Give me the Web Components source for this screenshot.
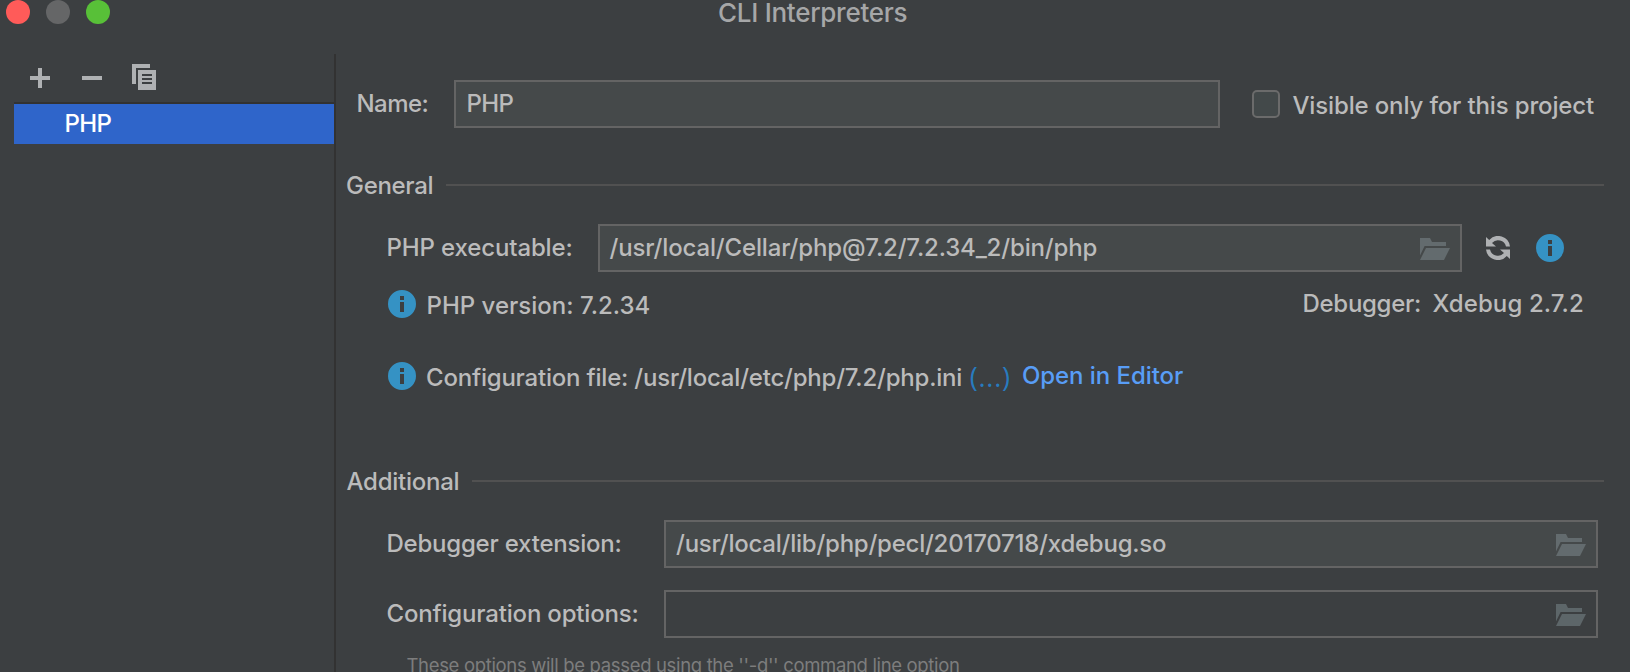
<!DOCTYPE html>
<html lang="en">
<head>
<meta charset="utf-8">
<title>CLI Interpreters</title>
<style>
  html, body { margin: 0; height: 100%; overflow: hidden; background: #3c3f41; }
</style>
</head>
<body>
<cli-dialog></cli-dialog>
<script>
const define = (name, html, Base = HTMLElement, ready) => {
  const template = document.createElement('template');
  template.innerHTML = html;
  customElements.define(name, class extends Base {
    connectedCallback() {
      if (this.shadowRoot) return;
      this.attachShadow({ mode: 'open' }).append(template.content.cloneNode(true));
      if (ready) ready(this);
    }
  });
};

/* A single line of text whose ink spans exactly `w` pixels. */
const ctx = document.createElement('canvas').getContext('2d');
define('ui-text', `
  <style>
    :host { display: block; flex: none; height: 30px; white-space: nowrap; line-height: 30px; }
    span { display: block; position: relative; }
  </style>
  <span><slot></slot></span>`, HTMLElement, el => {
    const span = el.shadowRoot.querySelector('span');
    const w = parseFloat(el.getAttribute('w'));
    const cs = getComputedStyle(el);
    const text = el.textContent;
    ctx.font = `${cs.fontWeight} ${cs.fontSize} ${cs.fontFamily}`;
    const m = ctx.measureText(text);
    const ink = m.actualBoundingBoxLeft + m.actualBoundingBoxRight;
    span.style.letterSpacing = ((w - ink) / (text.length - 1)).toFixed(3) + 'px';
    span.style.marginLeft = m.actualBoundingBoxLeft.toFixed(2) + 'px';
    el.style.width = w + 'px';
});

define('icon-info', `
  <style>:host { display: block; flex: none; width: 28px; height: 28px; } svg { display: block; }</style>
  <svg width="28" height="28" viewBox="0 0 28 28"><path fill="#3592c4" fill-rule="evenodd" d="M14 0a14 14 0 1 1 0 28a14 14 0 1 1 0-28zM12 6v4h4V6zM12 12v10h4V12z"/></svg>`);

define('icon-folder', `
  <style>:host { display: block; flex: none; width: 30px; height: 22px; color: #636b6e; } svg { display: block; }</style>
  <svg width="30" height="22" viewBox="0 0 30 22" fill="currentColor"><path d="M0 0H10L12 4H26V8H4.6L0 17.5z"/><path d="M6 10H30L24 22H0z"/></svg>`);

define('icon-refresh', `
  <style>:host { display: block; flex: none; width: 24px; height: 24px; } svg { display: block; }</style>
  <svg width="24" height="24" viewBox="0 0 24 24" fill="#afb1b3">
    <path d="M0 1L3.2 4.1A11.9 11.9 0 0 1 24 10.5H20A8.2 8.2 0 0 0 6 6.9L10 10.6H0z"/>
    <path transform="rotate(180 12 12)" d="M0 1L3.2 4.1A11.9 11.9 0 0 1 24 10.5H20A8.2 8.2 0 0 0 6 6.9L10 10.6H0z"/>
  </svg>`);

define('title-bar', `
  <style>
    :host { display: grid; grid-template-columns: 719px 1fr; height: 54px; align-items: start; color: #a6a7a8; font-size: 26px; }
    .lights { display: flex; gap: 16px; padding-left: 6px; }
    i { width: 24px; height: 24px; border-radius: 50%; background: #656667; }
    .r { background: #ff5b59; } .g { background: #58c038; }
    ui-text { line-height: 26px; height: 26px; }
  </style>
  <div class="lights"><i class="r"></i><i></i><i class="g"></i></div>
  <ui-text w="187.5">CLI Interpreters</ui-text>`);

define('side-list', `
  <style>
    :host { display: flex; flex-direction: column; box-sizing: border-box; width: 336px; border-right: 2px solid #323232; padding-left: 14px; }
    nav { display: flex; height: 48px; padding-left: 16px; box-sizing: border-box; }
    svg { display: block; }
    .add { margin: 14px 32px 0 0; } .del { margin: 22px 30px 0 0; } .copy { margin-top: 10px; }
    .row { display: flex; box-sizing: border-box; height: 42px; border-top: 2px solid #323232; background: #2f65ca; color: #fff; padding: 5px 0 0 51.5px; }
  </style>
  <nav>
    <svg class="add" width="20" height="20" fill="#afb1b3"><path d="M8 0h4v8h8v4h-8v8H8v-8H0V8h8z"/></svg>
    <svg class="del" width="20" height="4" fill="#afb1b3"><path d="M0 0h20v4H0z"/></svg>
    <svg class="copy" width="24" height="26" fill="#afb1b3"><path d="M0 0H18V4H4V20H0z"/><path fill-rule="evenodd" d="M6 6H24V26H6zM10 10v2h10v-2zM10 14v2h10v-2zM10 18v2h10v-2z"/></svg>
  </nav>
  <div class="row"><ui-text w="46">PHP</ui-text></div>`);

define('path-field', `
  <style>
    :host { display: flex; flex: none; justify-content: space-between; box-sizing: border-box; height: 48px; border: 2px solid #646464; background: #45494a; padding: 7px 10px 0; }
    :host([empty]) { background: #3c3f41; justify-content: flex-end; }
    :host([empty]) icon-folder { color: #5d6669; }
    icon-folder { margin-top: 5px; }
    :host([plain]) icon-folder { display: none; }
  </style>
  <slot></slot><icon-folder></icon-folder>`);

define('section-title', `
  <style>
    :host { display: flex; flex: none; align-items: flex-start; gap: 13.5px; height: 30px; margin-right: 26px; }
    hr { flex: 1; border: 0; height: 2px; background: #515151; margin: 14px 0 0; }
    ::slotted(*) { margin-top: 1px; }
  </style>
  <slot></slot><hr>`);

define('form-row', `
  <style>:host { display: flex; flex: none; align-items: flex-start; height: 48px; }</style><slot></slot>`);

define('interpreter-form', `
  <style>
    :host { display: flex; flex-direction: column; flex: 1; padding: 26px 0 0 11px; min-width: 0; }
    .name { padding-left: 10.5px; }
    .ind { padding-left: 41px; }
    form-row > ui-text { margin-top: 9px; }
    i { box-sizing: border-box; flex: none; width: 28px; height: 28px; border: 2px solid #6b6b6b; border-radius: 5px; background: #43494a; margin: 10px 12.5px 0 32px; }
    .ex { margin-top: 24px; }
    .link { color: #589df6; }
    .dots { color: #287bbf; font-family: "Open Sans", sans-serif; font-size: 27px; font-weight: 400; }
    .hint { color: #7d7d7d; font-size: 18.5px; font-weight: 400; margin: 12px 0 0 59.5px; }
  </style>
  <form-row class="name">
    <ui-text w="70">Name:</ui-text>
    <path-field plain style="width:766px;margin-left:26.5px"><ui-text w="46" style="margin-left:1.5px">PHP</ui-text></path-field>
    <i></i><ui-text w="301.5" style="margin-top:11px">Visible only for this project</ui-text>
  </form-row>
  <section-title style="margin-top:42px"><ui-text w="85.5">General</ui-text></section-title>
  <form-row class="ind ex">
    <ui-text w="184" style="margin-left:-.5px">PHP executable:</ui-text>
    <path-field style="width:864px;margin-left:26.5px"><ui-text w="487" style="margin-left:-.5px">/usr/local/Cellar/php@7.2/7.2.34_2/bin/php</ui-text></path-field>
    <icon-refresh style="margin:12px 26px 0 24px"></icon-refresh>
    <icon-info style="margin-top:10px"></icon-info>
  </form-row>
  <form-row class="ind" style="margin-top:18px;height:44px">
    <icon-info style="margin:0 11.5px 0 0"></icon-info>
    <ui-text w="222" style="margin-top:1px">PHP version: 7.2.34</ui-text>
    <ui-text w="116.5" style="margin:-1px 12.5px 0 654px">Debugger:</ui-text>
    <ui-text w="150.5" style="margin-top:-1px">Xdebug 2.7.2</ui-text>
  </form-row>
  <form-row class="ind" style="margin-top:28px;height:44px">
    <icon-info style="margin:0 11px 0 0"></icon-info>
    <ui-text w="534.3" style="margin-top:1px">Configuration file: /usr/local/etc/php/7.2/php.ini</ui-text>
    <ui-text class="dots" w="38.3" style="margin:0 14px 0 9.4px">(...)</ui-text>
    <ui-text class="link" w="160" style="margin-top:-1px">Open in Editor</ui-text>
  </form-row>
  <section-title style="margin-top:60px"><ui-text w="112" style="margin-left:-.5px">Additional</ui-text></section-title>
  <form-row class="ind ex">
    <ui-text w="233" style="margin-left:-.5px">Debugger extension:</ui-text>
    <path-field style="width:934px;margin-left:43.5px"><ui-text w="490">/usr/local/lib/php/pecl/20170718/xdebug.so</ui-text></path-field>
  </form-row>
  <form-row class="ind" style="margin-top:22px">
    <ui-text w="250" style="margin-left:-.5px">Configuration options:</ui-text>
    <path-field empty style="width:934px;margin-left:26.5px"></path-field>
  </form-row>
  <ui-text class="hint" w="552.5">These options will be passed using the ''-d'' command line option</ui-text>`);

define('cli-dialog', `
  <style>
    :host { display: flex; flex-direction: column; width: 1630px; height: 672px; overflow: hidden; background: #3c3f41; color: #bbb; font: 450 24px Inter, sans-serif; }
    main { display: flex; flex: 1; min-height: 0; }
  </style>
  <title-bar></title-bar>
  <main><side-list></side-list><interpreter-form></interpreter-form></main>`);
</script>
</body>
</html>
